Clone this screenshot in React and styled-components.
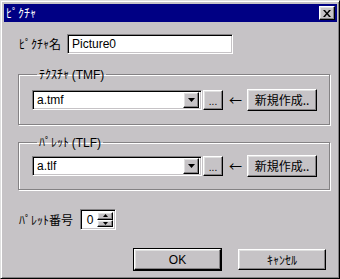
import React from "react";
import styled, { createGlobalStyle } from "styled-components";

const Global = createGlobalStyle`
  html, body { margin: 0; padding: 0; background: #c6c3c6; }
  body { font: 12px "Noto Sans CJK JP", "Liberation Sans", sans-serif; color: #000; }
  * { box-sizing: border-box; }
`;

const raised = `
  border: 1px solid;
  border-color: #fff #000 #000 #fff;
  box-shadow: inset -1px -1px 0 #848284, inset 1px 1px 0 #dfdfdf;
  background: #c6c3c6;
`;

const sunken = `
  border: 1px solid;
  border-color: #848284 #fff #fff #848284;
  box-shadow: inset 1px 1px 0 #000, inset -1px -1px 0 #c6c3c6;
  background: #fff;
`;

const Window = styled.div`
  width: 340px;
  height: 279px;
  padding: 2px;
  border: 1px solid;
  border-color: #dfdfdf #000 #000 #dfdfdf;
  box-shadow: inset 1px 1px 0 #fff, inset -1px -1px 0 #848284;
  background: #c6c3c6;
  display: flex;
  flex-direction: column;
`;

const TitleBar = styled.div`
  height: 18px;
  margin: 1px 0 0 1px;
  background: #000084;
  color: #fff;
  display: flex;
  align-items: center;
  justify-content: space-between;
  padding: 0 2px 0 2px;
`;

const Title = styled.span`
  font-size: 12px;
  line-height: 18px;
`;

const CloseButton = styled.div`
  ${raised}
  width: 16px;
  height: 14px;
  display: flex;
  align-items: center;
  justify-content: center;
`;

const Body = styled.div`
  flex: 1;
  display: flex;
  flex-direction: column;
  padding: 12px 11px 0 15px;
`;

const Row = styled.div`
  display: flex;
  align-items: center;
  margin-top: ${(p) => p.$top || 0}px;
`;

const Label = styled.span`
  width: ${(p) => p.$w}px;
  padding-left: 1px;
  white-space: nowrap;
  line-height: 16px;
`;

const Latin = styled.span`
  font-family: "Liberation Sans", sans-serif;
  font-size: 12px;
`;

const TextField = styled.div`
  ${sunken}
  width: ${(p) => p.$w}px;
  height: 20px;
  padding: 0 4px;
  line-height: 18px;
  font-family: "Liberation Sans", sans-serif;
`;

const Group = styled.fieldset`
  width: 310px;
  margin: ${(p) => p.$top}px 0 0 0;
  padding: ${(p) => p.$pt}px 12px ${(p) => p.$pb}px 13px;
  border: 1px solid #848284;
  box-shadow: 1px 1px 0 #fff, inset 1px 1px 0 #fff;
`;

const Legend = styled.legend`
  padding: 0 2px;
  margin-left: 5px;
  line-height: 14px;
`;

const Combo = styled.div`
  ${sunken}
  width: 170px;
  height: 20px;
  display: flex;
  align-items: center;
  padding: 2px;
`;

const ComboText = styled.span`
  flex: 1;
  padding-left: 2px;
  line-height: 16px;
  font-family: "Liberation Sans", sans-serif;
`;

const DropButton = styled.div`
  ${raised}
  width: 16px;
  height: 16px;
  display: flex;
  align-items: center;
  justify-content: center;
`;

const Button = styled.div`
  ${raised}
  width: ${(p) => p.$w}px;
  height: ${(p) => p.$h || 21}px;
  margin-left: ${(p) => p.$ml || 0}px;
  display: flex;
  align-items: center;
  justify-content: center;
  line-height: 16px;
  ${(p) =>
    p.$default &&
    `
    outline: 1px solid #000;
  `}
`;

const Dots = styled.span`
  font-family: "Liberation Sans", sans-serif;
  font-size: 10px;
  margin-top: 3px;
`;

const Arrow = styled.span`
  margin-left: 6px;
  width: 18px;
  font-size: 13px;
  line-height: 16px;
`;

const Spin = styled.div`
  ${sunken}
  width: 36px;
  height: 21px;
  display: flex;
  padding: 2px;
`;

const SpinValue = styled.span`
  flex: 1;
  text-align: center;
  line-height: 16px;
  font-family: "Liberation Sans", sans-serif;
`;

const SpinButtons = styled.div`
  display: flex;
  flex-direction: column;
  width: 16px;
`;

const SpinButton = styled.div`
  ${raised}
  flex: 1;
  display: flex;
  align-items: center;
  justify-content: center;
`;

const Footer = styled.div`
  display: flex;
  justify-content: flex-end;
  margin-top: 19px;
`;

const Triangle = ({ up, size = 7 }) => {
  const h = Math.ceil(size / 2);
  return (
    <svg width={size} height={h} viewBox={`0 0 ${size} ${h}`}>
      <polygon
        points={up ? `0,${h} ${size},${h} ${size / 2},0` : `0,0 ${size},0 ${size / 2},${h}`}
        fill="#000"
      />
    </svg>
  );
};

const FileRow = ({ file }) => (
  <Row>
    <Combo>
      <ComboText>{file}</ComboText>
      <DropButton>
        <Triangle />
      </DropButton>
    </Combo>
    <Button $w={20} $h={20} $ml={1}>
      <Dots>...</Dots>
    </Button>
    <Arrow>←</Arrow>
    <Button $w={70} $h={22}>新規作成..</Button>
  </Row>
);

export default function App() {
  return (
    <>
      <Global />
      <Window>
        <TitleBar>
          <Title>ﾋﾟｸﾁｬ</Title>
          <CloseButton>
            <svg width="8" height="7" viewBox="0 0 8 7">
              <path d="M0 0h2l2 2.5L6 0h2L5 3.5 8 7H6L4 4.5 2 7H0l3-3.5z" fill="#000" />
            </svg>
          </CloseButton>
        </TitleBar>
        <Body>
          <Row>
            <Label $w={49}>ﾋﾟｸﾁｬ名</Label>
            <TextField $w={166}>Picture0</TextField>
          </Row>
          <Group $top={13} $pt={7} $pb={13}>
            <Legend>
              ﾃｸｽﾁｬ <Latin>(TMF)</Latin>
            </Legend>
            <FileRow file="a.tmf" />
          </Group>
          <Group $top={10} $pt={5} $pb={12}>
            <Legend>
              ﾊﾟﾚｯﾄ <Latin>(TLF)</Latin>
            </Legend>
            <FileRow file="a.tlf" />
          </Group>
          <Row $top={19}>
            <Label $w={62}>ﾊﾟﾚｯﾄ番号</Label>
            <Spin>
              <SpinValue>0</SpinValue>
              <SpinButtons>
                <SpinButton>
                  <Triangle up size={5} />
                </SpinButton>
                <SpinButton>
                  <Triangle size={5} />
                </SpinButton>
              </SpinButtons>
            </Spin>
          </Row>
          <Footer>
            <Button $w={87} $default>
              <Latin>OK</Latin>
            </Button>
            <Button $w={88} $ml={17}>
              ｷｬﾝｾﾙ
            </Button>
          </Footer>
        </Body>
      </Window>
    </>
  );
}
